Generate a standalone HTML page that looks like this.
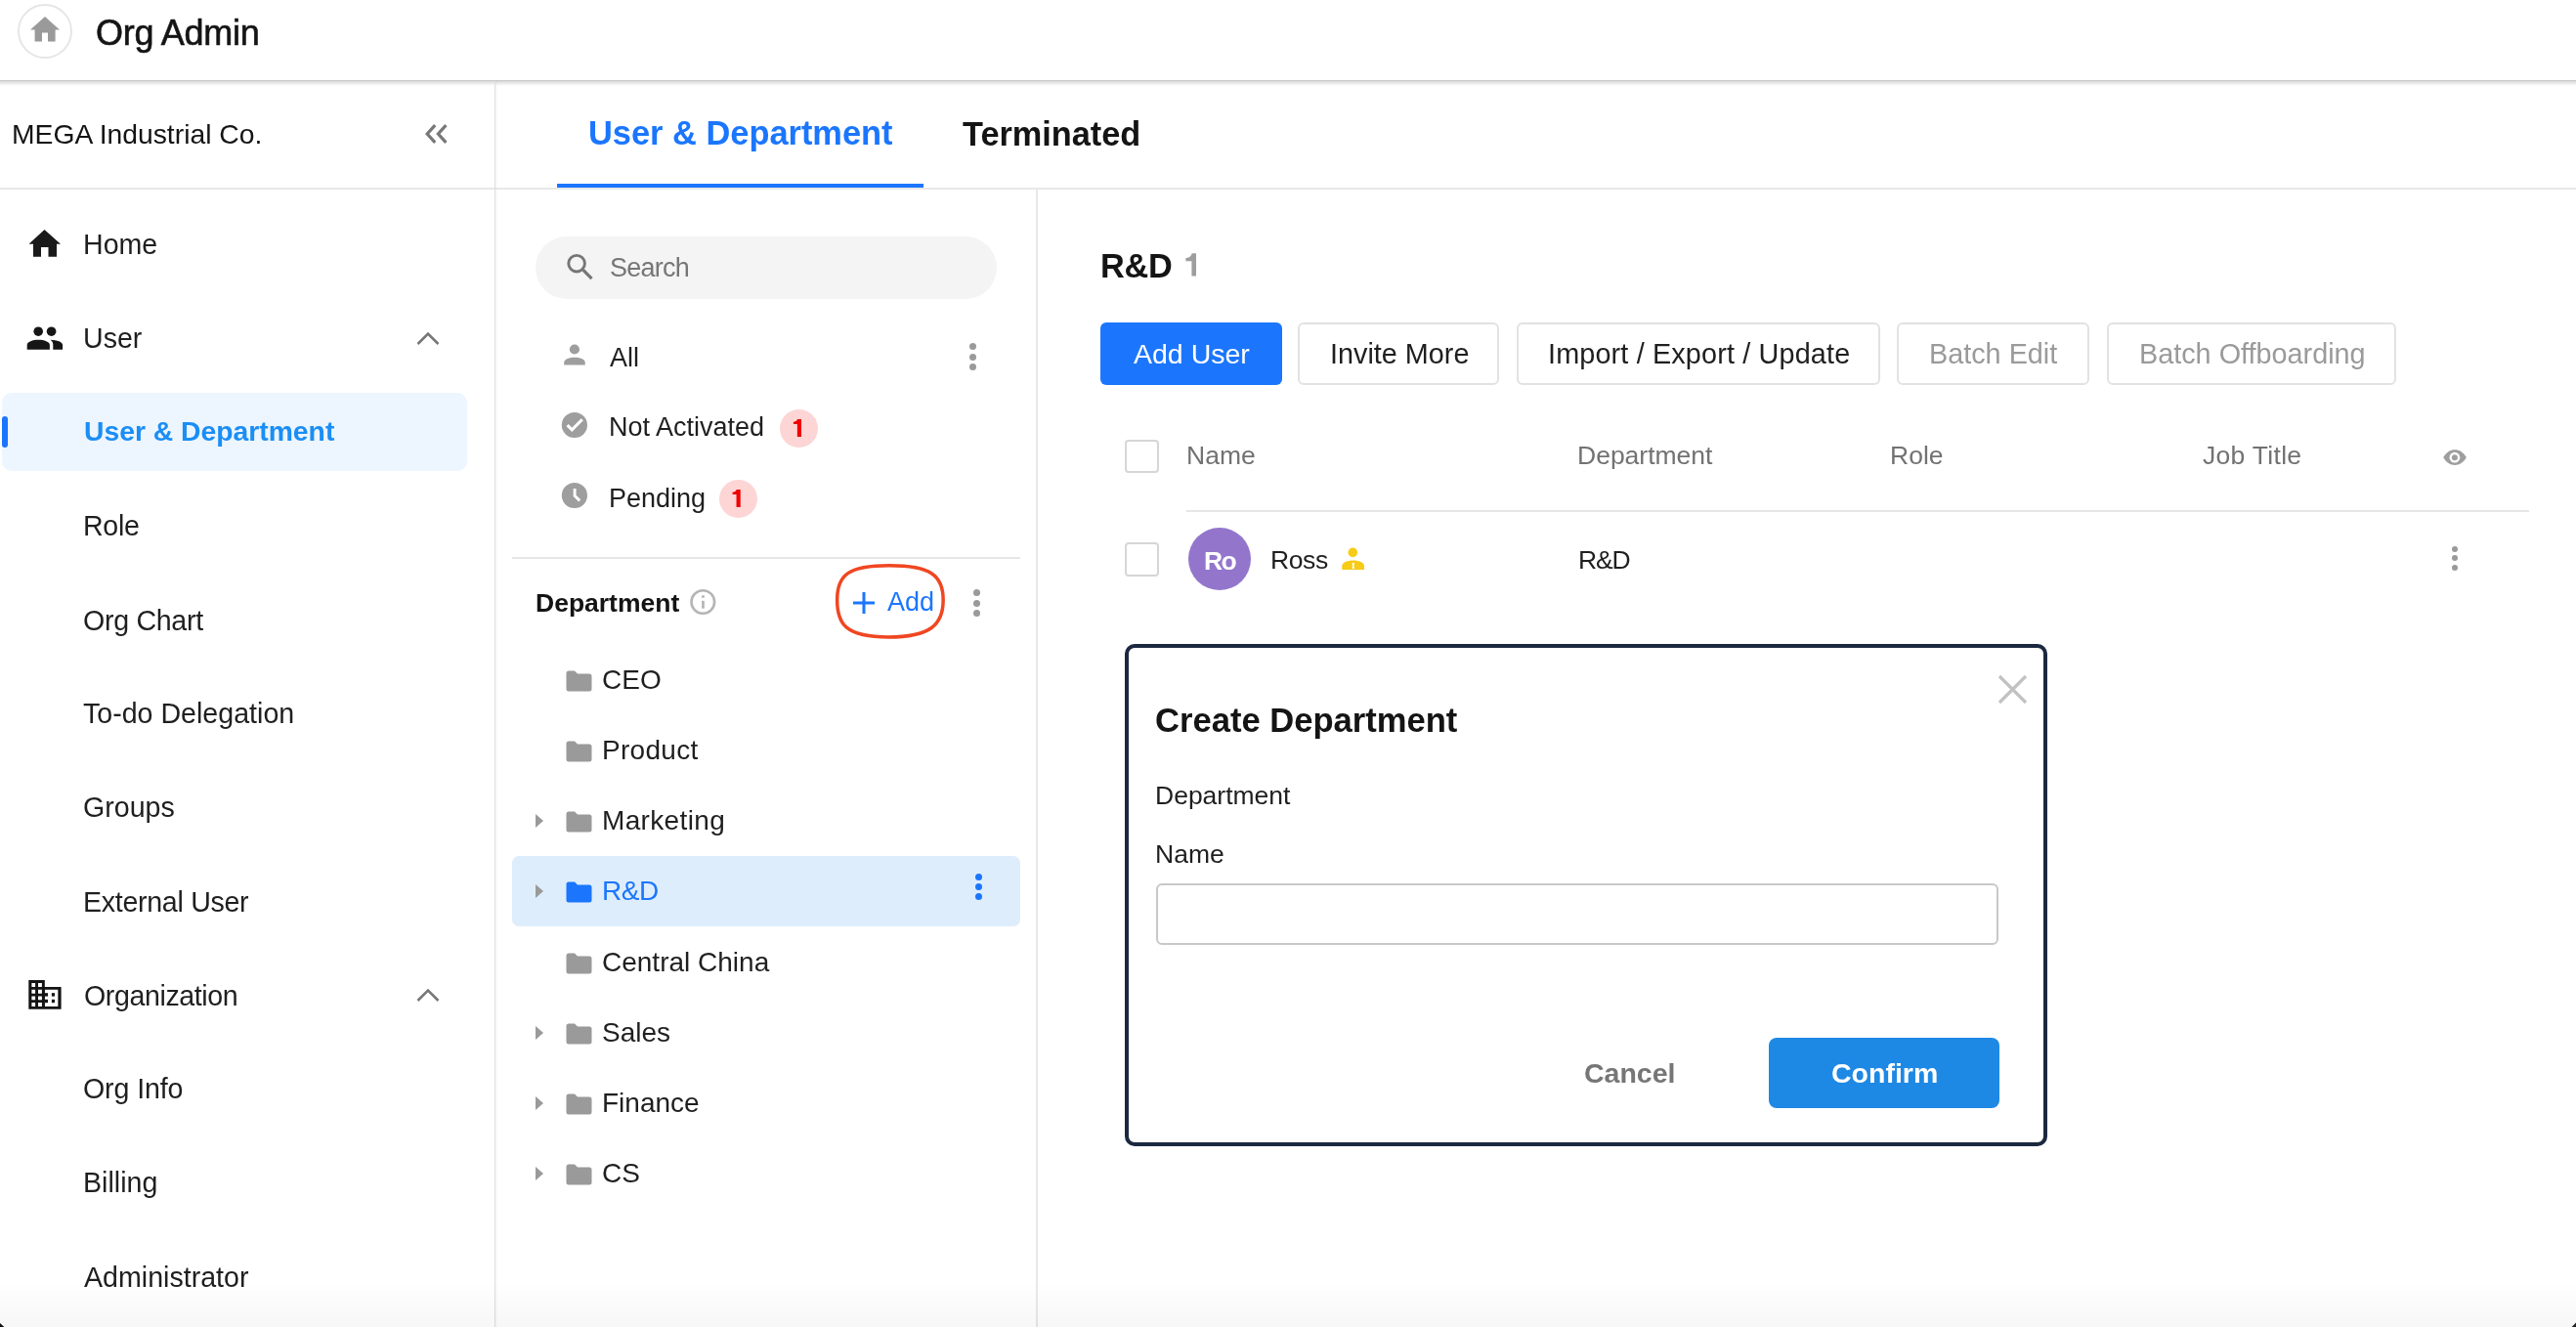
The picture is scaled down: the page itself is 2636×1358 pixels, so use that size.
<!DOCTYPE html>
<html><head><meta charset="utf-8"><title>Org Admin</title>
<style>
html,body{margin:0;padding:0;background:#fff;width:2636px;height:1358px;overflow:hidden;position:relative}
.t{position:absolute;white-space:nowrap;line-height:1;font-family:'Liberation Sans', sans-serif;will-change:transform}
</style></head><body>
<div style="position:absolute;left:0px;top:0px;width:2636px;height:82px;background:#fff"></div>
<div style="position:absolute;left:0px;top:82px;width:2636px;height:1px;background:#c9c9c9"></div>
<div style="position:absolute;left:0px;top:83px;width:2636px;height:5px;background:linear-gradient(#00000026,#00000000)"></div>
<div style="position:absolute;left:18px;top:4px;width:52px;height:52px;border:2px solid #e6e6e6;border-radius:50%"></div>
<svg style="position:absolute;left:30px;top:16px" width="32" height="28" viewBox="0 0 32 28"><path d="M16 1 L31 14.6 L26.6 14.6 L26.6 26.5 L19 26.5 L19 17.4 L13 17.4 L13 26.5 L5.6 26.5 L5.6 14.6 L1 14.6 Z" fill="#9a9a9a"/></svg>
<div class="t" style="left:98px;top:15.5px;font-size:36px;color:#141414;font-weight:normal;-webkit-text-stroke:0.6px #141414;letter-spacing:-0.3px">Org Admin</div>
<div class="t" style="left:12px;top:123px;font-size:28.3px;color:#141414;font-weight:normal;">MEGA Industrial Co.</div>
<svg style="position:absolute;left:425px;top:118px" width="45" height="38" viewBox="425 118 45 38"><path d="M445.2 128.2 L437.2 137 L445.2 145.8 M456.4 128.2 L448.4 137 L456.4 145.8" stroke="#777" stroke-width="3.2" fill="none" stroke-linejoin="miter"/></svg>
<div style="position:absolute;left:0px;top:192px;width:2636px;height:2px;background:#e8e8e8"></div>
<div style="position:absolute;left:506px;top:83px;width:1px;height:1275px;background:#e0e0e0"></div>
<div style="position:absolute;left:507px;top:83px;width:3px;height:1275px;background:linear-gradient(90deg,#00000008,#00000000)"></div>
<svg style="position:absolute;left:29px;top:234px" width="34" height="30" viewBox="0 0 34 30"><path d="M16.5 1 L33 15.7 L29 15.7 L29 28.8 L20.5 28.8 L20.5 19 L13 19 L13 28.8 L5 28.8 L5 15.7 L0.5 15.7 Z" fill="#1a1a1a"/></svg>
<div class="t" style="left:85px;top:236px;font-size:28.6px;color:#1f1f1f;font-weight:normal;">Home</div>
<svg style="position:absolute;left:20px;top:325px" width="55" height="40" viewBox="20 325 55 40"><circle cx="39.2" cy="339.2" r="4.8" fill="#161616"/><circle cx="52.6" cy="339.2" r="4.8" fill="#161616"/><path d="M27.7 357.7 V353 C27.7 349.8 33.5 347.8 39.3 347.8 C45.1 347.8 50.9 349.8 50.9 353 V357.7 Z" fill="#161616"/><path d="M54.3 357.7 V352.6 C54.3 350.6 53.2 349 51.6 347.8 C58.5 348 64.1 350 64.1 353 V357.7 Z" fill="#161616"/></svg>
<div class="t" style="left:85px;top:332px;font-size:28.6px;color:#1f1f1f;font-weight:normal;">User</div>
<svg style="position:absolute;left:425px;top:338px" width="26" height="16" viewBox="0 0 26 16"><path d="M2.5 14 L13 3.5 L23.5 14" stroke="#777" stroke-width="2.6" fill="none"/></svg>
<div style="position:absolute;left:2px;top:402px;width:476px;height:80px;background:#edf5fe;border-radius:10px"></div>
<div style="position:absolute;left:2px;top:426px;width:6px;height:32px;background:#1b76fe;border-radius:3px"></div>
<div class="t" style="left:86px;top:427px;font-size:28.3px;color:#1a8ef5;font-weight:bold;">User &amp; Department</div>
<div class="t" style="left:85px;top:524px;font-size:28.6px;color:#1f1f1f;font-weight:normal;letter-spacing:-0.3px">Role</div>
<div class="t" style="left:85px;top:620.5px;font-size:28.6px;color:#1f1f1f;font-weight:normal;letter-spacing:-0.3px">Org Chart</div>
<div class="t" style="left:85px;top:716px;font-size:28.6px;color:#1f1f1f;font-weight:normal;">To-do Delegation</div>
<div class="t" style="left:85px;top:812px;font-size:28.6px;color:#1f1f1f;font-weight:normal;">Groups</div>
<div class="t" style="left:85px;top:908.5px;font-size:28.6px;color:#1f1f1f;font-weight:normal;letter-spacing:-0.3px">External User</div>
<svg style="position:absolute;left:20px;top:995px" width="50" height="45" viewBox="20 995 50 45"><path fill="#141414" fill-rule="evenodd" d="M29.3 1003.1 H45.8 V1009.9 H62.6 V1032.65 H29.3 Z M32.4 1005.9 H36.1 V1009.9 H32.4 Z M39 1005.9 H42.9 V1009.9 H39 Z M32.4 1012.8 H36.1 V1016.7 H32.4 Z M39 1012.8 H42.9 V1016.7 H39 Z M32.4 1019.4 H36.1 V1023.2 H32.4 Z M39 1019.4 H42.9 V1023.2 H39 Z M32.4 1026 H36.1 V1029.9 H32.4 Z M39 1026 H42.9 V1029.9 H39 Z M45.95 1012.8 H59.35 V1029.9 H45.95 Z"/><rect x="45.5" y="1016.2" width="3.5" height="3.4" fill="#141414"/><rect x="45.5" y="1022.8" width="3.5" height="3.4" fill="#141414"/><rect x="52.9" y="1016.2" width="3.1" height="3.4" fill="#141414"/><rect x="52.9" y="1022.8" width="3.1" height="3.4" fill="#141414"/></svg>
<div class="t" style="left:86px;top:1004.5px;font-size:28.6px;color:#1f1f1f;font-weight:normal;letter-spacing:-0.4px">Organization</div>
<svg style="position:absolute;left:425px;top:1010px" width="26" height="16" viewBox="0 0 26 16"><path d="M2.5 14 L13 3.5 L23.5 14" stroke="#777" stroke-width="2.6" fill="none"/></svg>
<div class="t" style="left:85px;top:1100px;font-size:28.6px;color:#1f1f1f;font-weight:normal;letter-spacing:-0.12px">Org Info</div>
<div class="t" style="left:85px;top:1196px;font-size:28.6px;color:#1f1f1f;font-weight:normal;">Billing</div>
<div class="t" style="left:86px;top:1292.5px;font-size:28.6px;color:#1f1f1f;font-weight:normal;">Administrator</div>
<div class="t" style="left:602px;top:118.5px;font-size:34.4px;color:#1b76fe;font-weight:bold;">User &amp; Department</div>
<div class="t" style="left:985px;top:119.5px;font-size:34.3px;color:#141414;font-weight:bold;">Terminated</div>
<div style="position:absolute;left:570px;top:188px;width:375px;height:4px;background:#1b76fd"></div>
<div style="position:absolute;left:1060px;top:194px;width:2px;height:1164px;background:#e8e8e8"></div>
<div style="position:absolute;left:548px;top:242px;width:472px;height:64px;background:#f4f4f4;border-radius:32px"></div>
<svg style="position:absolute;left:570px;top:250px" width="45" height="45" viewBox="570 250 45 45"><circle cx="590.1" cy="269.7" r="8.3" stroke="#767676" stroke-width="2.9" fill="none"/><path d="M596.6 276.2 L605.5 285.1" stroke="#767676" stroke-width="3.3"/></svg>
<div class="t" style="left:624px;top:260.5px;font-size:27px;color:#767676;font-weight:normal;letter-spacing:-0.75px">Search</div>
<svg style="position:absolute;left:570px;top:345px" width="40" height="35" viewBox="570 345 40 35"><circle cx="587.9" cy="357.5" r="5.1" fill="#9e9e9e"/><path d="M577.2 373.6 V371 C577.2 367.6 583 365.8 588 365.8 C593 365.8 598.75 367.6 598.75 371 V373.6 Z" fill="#9e9e9e"/></svg>
<div class="t" style="left:624px;top:352.5px;font-size:27px;color:#1f1f1f;font-weight:normal;">All</div>
<div style="position:absolute;left:992.0px;top:351.0px;width:7px;height:7px;border-radius:50%;background:#9a9a9a"></div>
<div style="position:absolute;left:992.0px;top:361.5px;width:7px;height:7px;border-radius:50%;background:#9a9a9a"></div>
<div style="position:absolute;left:992.0px;top:372.0px;width:7px;height:7px;border-radius:50%;background:#9a9a9a"></div>
<svg style="position:absolute;left:570px;top:418px" width="36" height="34" viewBox="570 418 36 34"><circle cx="587.9" cy="435" r="13.1" fill="#9e9e9e"/><path d="M580.6 435.1 L585.3 439.8 L595.8 429.3" stroke="#fff" stroke-width="3" fill="none" stroke-linejoin="miter"/></svg>
<div class="t" style="left:623px;top:424px;font-size:27px;color:#1f1f1f;font-weight:normal;">Not Activated</div>
<div style="position:absolute;left:797.5px;top:418.5px;width:39px;height:39px;border-radius:50%;background:#fdd5d5"></div>
<svg style="position:absolute;left:805px;top:424px" width="21" height="28" viewBox="805 424 21 28"><path d="M815.85 446.9 V434 H811.9 V431.75 C814 431.6 815.2 430.6 816 428.9 H820 V446.9 Z" fill="#f00000"/></svg>
<svg style="position:absolute;left:570px;top:490px" width="36" height="34" viewBox="570 490 36 34"><circle cx="587.9" cy="507" r="13.1" fill="#9e9e9e"/><path d="M588.1 500 V507.3 L593.2 512.4" stroke="#fff" stroke-width="2.9" fill="none" stroke-linejoin="miter"/></svg>
<div class="t" style="left:623px;top:496.5px;font-size:27px;color:#1f1f1f;font-weight:normal;">Pending</div>
<div style="position:absolute;left:735.5px;top:490.5px;width:39px;height:39px;border-radius:50%;background:#fdd5d5"></div>
<svg style="position:absolute;left:743px;top:496px" width="21" height="28" viewBox="743 496 21 28"><path transform="translate(-62.3 72)" d="M815.85 446.9 V434 H811.9 V431.75 C814 431.6 815.2 430.6 816 428.9 H820 V446.9 Z" fill="#f00000"/></svg>
<div style="position:absolute;left:524px;top:570px;width:520px;height:2px;background:#e6e6e6"></div>
<div class="t" style="left:547.5px;top:604px;font-size:26.5px;color:#141414;font-weight:bold;">Department</div>
<svg style="position:absolute;left:700px;top:596px" width="40" height="40" viewBox="700 596 40 40"><circle cx="719.3" cy="616" r="11.8" stroke="#b5b5b5" stroke-width="2.6" fill="none"/><rect x="718.1" y="614.8" width="2.7" height="7.9" fill="#b5b5b5"/><rect x="718.1" y="609.3" width="2.7" height="2.5" fill="#b5b5b5"/></svg>
<svg style="position:absolute;left:872px;top:605px" width="24" height="24" viewBox="0 0 24 24"><path d="M12 1 V23 M1 12 H23" stroke="#1b76fd" stroke-width="3"/></svg>
<div class="t" style="left:908px;top:602.5px;font-size:27px;color:#1b76fd;font-weight:normal;">Add</div>
<div style="position:absolute;left:995.75px;top:603.0px;width:7px;height:7px;border-radius:50%;background:#9a9a9a"></div>
<div style="position:absolute;left:995.75px;top:613.5px;width:7px;height:7px;border-radius:50%;background:#9a9a9a"></div>
<div style="position:absolute;left:995.75px;top:624.0px;width:7px;height:7px;border-radius:50%;background:#9a9a9a"></div>
<svg style="position:absolute;left:845px;top:568px" width="130" height="94" viewBox="845 568 130 94"><path d="M910 578.85 C952.5 578.85 965.15 588.7 965.15 614 C965.15 639.3 952 651.95 909 651.95 C866 651.95 856.65 639.3 856.65 614 C856.65 588.7 867.5 578.85 910 578.85 Z" stroke="#f04622" stroke-width="3.5" fill="none"/></svg>
<div style="position:absolute;left:524px;top:876px;width:520px;height:72px;background:#deedfc;border-radius:7px"></div>
<svg style="position:absolute;left:578.5px;top:685.5px" width="27" height="22" viewBox="0 0 27 22"><path d="M0.5 3 Q0.5 0.5 3 0.5 L9 0.5 L12 3.5 L24 3.5 Q26.5 3.5 26.5 6 L26.5 19 Q26.5 21.5 24 21.5 L3 21.5 Q0.5 21.5 0.5 19 Z" fill="#9a9a9a"/></svg>
<div class="t" style="left:616px;top:681.5px;font-size:28px;color:#1f1f1f;font-weight:normal;">CEO</div>
<svg style="position:absolute;left:578.5px;top:758px" width="27" height="22" viewBox="0 0 27 22"><path d="M0.5 3 Q0.5 0.5 3 0.5 L9 0.5 L12 3.5 L24 3.5 Q26.5 3.5 26.5 6 L26.5 19 Q26.5 21.5 24 21.5 L3 21.5 Q0.5 21.5 0.5 19 Z" fill="#9a9a9a"/></svg>
<div class="t" style="left:616px;top:754px;font-size:28px;color:#1f1f1f;font-weight:normal;letter-spacing:0.3px">Product</div>
<svg style="position:absolute;left:578.5px;top:830px" width="27" height="22" viewBox="0 0 27 22"><path d="M0.5 3 Q0.5 0.5 3 0.5 L9 0.5 L12 3.5 L24 3.5 Q26.5 3.5 26.5 6 L26.5 19 Q26.5 21.5 24 21.5 L3 21.5 Q0.5 21.5 0.5 19 Z" fill="#9a9a9a"/></svg>
<svg style="position:absolute;left:547px;top:832px" width="10" height="16" viewBox="0 0 10 16"><path d="M1 1 L9 8 L1 15 Z" fill="#9a9a9a"/></svg>
<div class="t" style="left:616px;top:826px;font-size:28px;color:#1f1f1f;font-weight:normal;letter-spacing:0.35px">Marketing</div>
<svg style="position:absolute;left:578.5px;top:902px" width="27" height="22" viewBox="0 0 27 22"><path d="M0.5 3 Q0.5 0.5 3 0.5 L9 0.5 L12 3.5 L24 3.5 Q26.5 3.5 26.5 6 L26.5 19 Q26.5 21.5 24 21.5 L3 21.5 Q0.5 21.5 0.5 19 Z" fill="#1b76fd"/></svg>
<svg style="position:absolute;left:547px;top:904px" width="10" height="16" viewBox="0 0 10 16"><path d="M1 1 L9 8 L1 15 Z" fill="#9a9a9a"/></svg>
<div class="t" style="left:616px;top:898px;font-size:28px;color:#1b76fd;font-weight:normal;letter-spacing:-0.5px">R&amp;D</div>
<svg style="position:absolute;left:578.5px;top:974.5px" width="27" height="22" viewBox="0 0 27 22"><path d="M0.5 3 Q0.5 0.5 3 0.5 L9 0.5 L12 3.5 L24 3.5 Q26.5 3.5 26.5 6 L26.5 19 Q26.5 21.5 24 21.5 L3 21.5 Q0.5 21.5 0.5 19 Z" fill="#9a9a9a"/></svg>
<div class="t" style="left:616px;top:970.5px;font-size:28px;color:#1f1f1f;font-weight:normal;">Central China</div>
<svg style="position:absolute;left:578.5px;top:1046.5px" width="27" height="22" viewBox="0 0 27 22"><path d="M0.5 3 Q0.5 0.5 3 0.5 L9 0.5 L12 3.5 L24 3.5 Q26.5 3.5 26.5 6 L26.5 19 Q26.5 21.5 24 21.5 L3 21.5 Q0.5 21.5 0.5 19 Z" fill="#9a9a9a"/></svg>
<svg style="position:absolute;left:547px;top:1048.5px" width="10" height="16" viewBox="0 0 10 16"><path d="M1 1 L9 8 L1 15 Z" fill="#9a9a9a"/></svg>
<div class="t" style="left:616px;top:1042.5px;font-size:28px;color:#1f1f1f;font-weight:normal;">Sales</div>
<svg style="position:absolute;left:578.5px;top:1118.5px" width="27" height="22" viewBox="0 0 27 22"><path d="M0.5 3 Q0.5 0.5 3 0.5 L9 0.5 L12 3.5 L24 3.5 Q26.5 3.5 26.5 6 L26.5 19 Q26.5 21.5 24 21.5 L3 21.5 Q0.5 21.5 0.5 19 Z" fill="#9a9a9a"/></svg>
<svg style="position:absolute;left:547px;top:1120.5px" width="10" height="16" viewBox="0 0 10 16"><path d="M1 1 L9 8 L1 15 Z" fill="#9a9a9a"/></svg>
<div class="t" style="left:616px;top:1114.5px;font-size:28px;color:#1f1f1f;font-weight:normal;">Finance</div>
<svg style="position:absolute;left:578.5px;top:1190.5px" width="27" height="22" viewBox="0 0 27 22"><path d="M0.5 3 Q0.5 0.5 3 0.5 L9 0.5 L12 3.5 L24 3.5 Q26.5 3.5 26.5 6 L26.5 19 Q26.5 21.5 24 21.5 L3 21.5 Q0.5 21.5 0.5 19 Z" fill="#9a9a9a"/></svg>
<svg style="position:absolute;left:547px;top:1192.5px" width="10" height="16" viewBox="0 0 10 16"><path d="M1 1 L9 8 L1 15 Z" fill="#9a9a9a"/></svg>
<div class="t" style="left:616px;top:1186.5px;font-size:28px;color:#1f1f1f;font-weight:normal;">CS</div>
<div style="position:absolute;left:997.75px;top:893.5px;width:7px;height:7px;border-radius:50%;background:#1b76fd"></div>
<div style="position:absolute;left:997.75px;top:903.5px;width:7px;height:7px;border-radius:50%;background:#1b76fd"></div>
<div style="position:absolute;left:997.75px;top:913.5px;width:7px;height:7px;border-radius:50%;background:#1b76fd"></div>
<div class="t" style="left:1126px;top:254.5px;font-size:34.3px;color:#141414;font-weight:bold;letter-spacing:-0.3px">R&amp;D</div>
<svg style="position:absolute;left:1205px;top:252px" width="27" height="38" viewBox="1205 252 27 38"><path d="M1219.4 282.6 V267.2 H1213.4 V264.1 C1216.5 264 1218.6 262.5 1219.8 259.2 H1224 V282.6 Z" fill="#9e9e9e"/></svg>
<div style="position:absolute;left:1126px;top:330px;width:186px;height:63.5px;background:#1b76fd;border-radius:6px"></div>
<div class="t" style="left:1159.5px;top:348px;font-size:28.5px;color:#fff;font-weight:normal;">Add User</div>
<div style="position:absolute;left:1328px;top:330px;width:202px;height:59.5px;border:2px solid #e2e2e2;border-radius:6px"></div>
<div class="t" style="left:1360.5px;top:348px;font-size:28.8px;color:#1f1f1f;font-weight:normal;">Invite More</div>
<div style="position:absolute;left:1551.5px;top:330px;width:368.5px;height:59.5px;border:2px solid #e2e2e2;border-radius:6px"></div>
<div class="t" style="left:1584.2px;top:348px;font-size:28.8px;color:#1f1f1f;font-weight:normal;letter-spacing:0.15px">Import / Export / Update</div>
<div style="position:absolute;left:1941px;top:330px;width:193px;height:59.5px;border:2px solid #e2e2e2;border-radius:6px"></div>
<div class="t" style="left:1973.7px;top:348px;font-size:28.8px;color:#9a9a9a;font-weight:normal;">Batch Edit</div>
<div style="position:absolute;left:2155.5px;top:330px;width:292.5px;height:59.5px;border:2px solid #e2e2e2;border-radius:6px"></div>
<div class="t" style="left:2189px;top:348px;font-size:28.8px;color:#9a9a9a;font-weight:normal;">Batch Offboarding</div>
<div style="position:absolute;left:1150.5px;top:449.5px;width:31px;height:30.5px;border:2px solid #d6d6d6;border-radius:4px"></div>
<div class="t" style="left:1214px;top:452.5px;font-size:26.5px;color:#727272;font-weight:normal;">Name</div>
<div class="t" style="left:1613.5px;top:452.5px;font-size:26.5px;color:#727272;font-weight:normal;">Department</div>
<div class="t" style="left:1933.5px;top:452.5px;font-size:26.5px;color:#727272;font-weight:normal;">Role</div>
<div class="t" style="left:2253.5px;top:452.5px;font-size:26.5px;color:#727272;font-weight:normal;letter-spacing:0.3px">Job Title</div>
<svg style="position:absolute;left:2490px;top:450px" width="45" height="35" viewBox="2490 450 45 35"><path d="M2500.2 468.1 C2503.5 462.4 2507.5 460.2 2512 460.2 C2516.5 460.2 2520.5 462.4 2523.9 468.1 C2520.5 473.8 2516.5 476 2512 476 C2507.5 476 2503.5 473.8 2500.2 468.1 Z" fill="#9e9e9e"/><circle cx="2511.9" cy="468.2" r="5.4" fill="#fff"/><circle cx="2511.9" cy="468.2" r="3" fill="#9e9e9e"/></svg>
<div style="position:absolute;left:1214px;top:522px;width:1374px;height:2px;background:#e6e6e6"></div>
<div style="position:absolute;left:1150.5px;top:554.5px;width:31px;height:31px;border:2px solid #d6d6d6;border-radius:4px"></div>
<div style="position:absolute;left:1216px;top:540px;width:64px;height:64px;border-radius:50%;background:#9376cc"></div>
<div class="t" style="left:1231.5px;top:561px;font-size:26.5px;color:#fff;font-weight:bold;letter-spacing:-1.6px">Ro</div>
<div class="t" style="left:1299.5px;top:559.5px;font-size:26.5px;color:#1f1f1f;font-weight:normal;letter-spacing:-0.4px">Ross</div>
<svg style="position:absolute;left:1365px;top:552px" width="40" height="40" viewBox="1365 552 40 40"><circle cx="1384.3" cy="565.4" r="4.8" fill="#f7cb16"/><path d="M1373.3 583 V579.2 C1373.3 575.6 1379 573.5 1384.6 573.5 C1390.3 573.5 1396 575.6 1396 579.2 V583 Z" fill="#f7cb16"/><path d="M1383.5 576.1 H1386 L1385.5 579 L1386 582.1 H1383.5 L1384 579 Z" fill="#fff"/></svg>
<div class="t" style="left:1615px;top:560px;font-size:26.5px;color:#1f1f1f;font-weight:normal;letter-spacing:-1.2px">R&amp;D</div>
<div style="position:absolute;left:2508.5px;top:559px;width:6px;height:6px;border-radius:50%;background:#9a9a9a"></div>
<div style="position:absolute;left:2508.5px;top:568.25px;width:6px;height:6px;border-radius:50%;background:#9a9a9a"></div>
<div style="position:absolute;left:2508.5px;top:577.5px;width:6px;height:6px;border-radius:50%;background:#9a9a9a"></div>
<div style="position:absolute;left:1151px;top:659px;width:936px;height:506px;border:4px solid #1b2940;border-radius:10px;background:#fff"></div>
<svg style="position:absolute;left:2044px;top:690px" width="31" height="31" viewBox="0 0 31 31"><path d="M2 2 L29 29 M29 2 L2 29" stroke="#c2c2c2" stroke-width="3.2"/></svg>
<div class="t" style="left:1182px;top:719.5px;font-size:34.6px;color:#141414;font-weight:bold;">Create Department</div>
<div class="t" style="left:1182px;top:800.5px;font-size:26.5px;color:#1f1f1f;font-weight:normal;">Department</div>
<div class="t" style="left:1182px;top:860.5px;font-size:26.5px;color:#1f1f1f;font-weight:normal;">Name</div>
<div style="position:absolute;left:1182.5px;top:904px;width:858.5px;height:59px;border:2px solid #c8c8c8;border-radius:6px"></div>
<div class="t" style="left:1620.5px;top:1083.5px;font-size:28.5px;color:#767676;font-weight:bold;">Cancel</div>
<div style="position:absolute;left:1810px;top:1062px;width:235.5px;height:72px;background:#1e88e5;border-radius:8px"></div>
<div class="t" style="left:1873.5px;top:1083.5px;font-size:28.5px;color:#fff;font-weight:bold;">Confirm</div>
<div style="position:absolute;left:0px;top:1312px;width:2636px;height:46px;background:linear-gradient(#00000000,#00000008)"></div>
<svg style="position:absolute;left:0px;top:1350px" width="8" height="8" viewBox="0 1350 8 8"><path d="M0 1354 L4.3 1358 L0 1358 Z" fill="#111"/></svg>
<svg style="position:absolute;left:2628px;top:1350px" width="8" height="8" viewBox="2628 1350 8 8"><path d="M2636 1353.6 L2631.6 1358 L2636 1358 Z" fill="#222"/></svg>
</body></html>
